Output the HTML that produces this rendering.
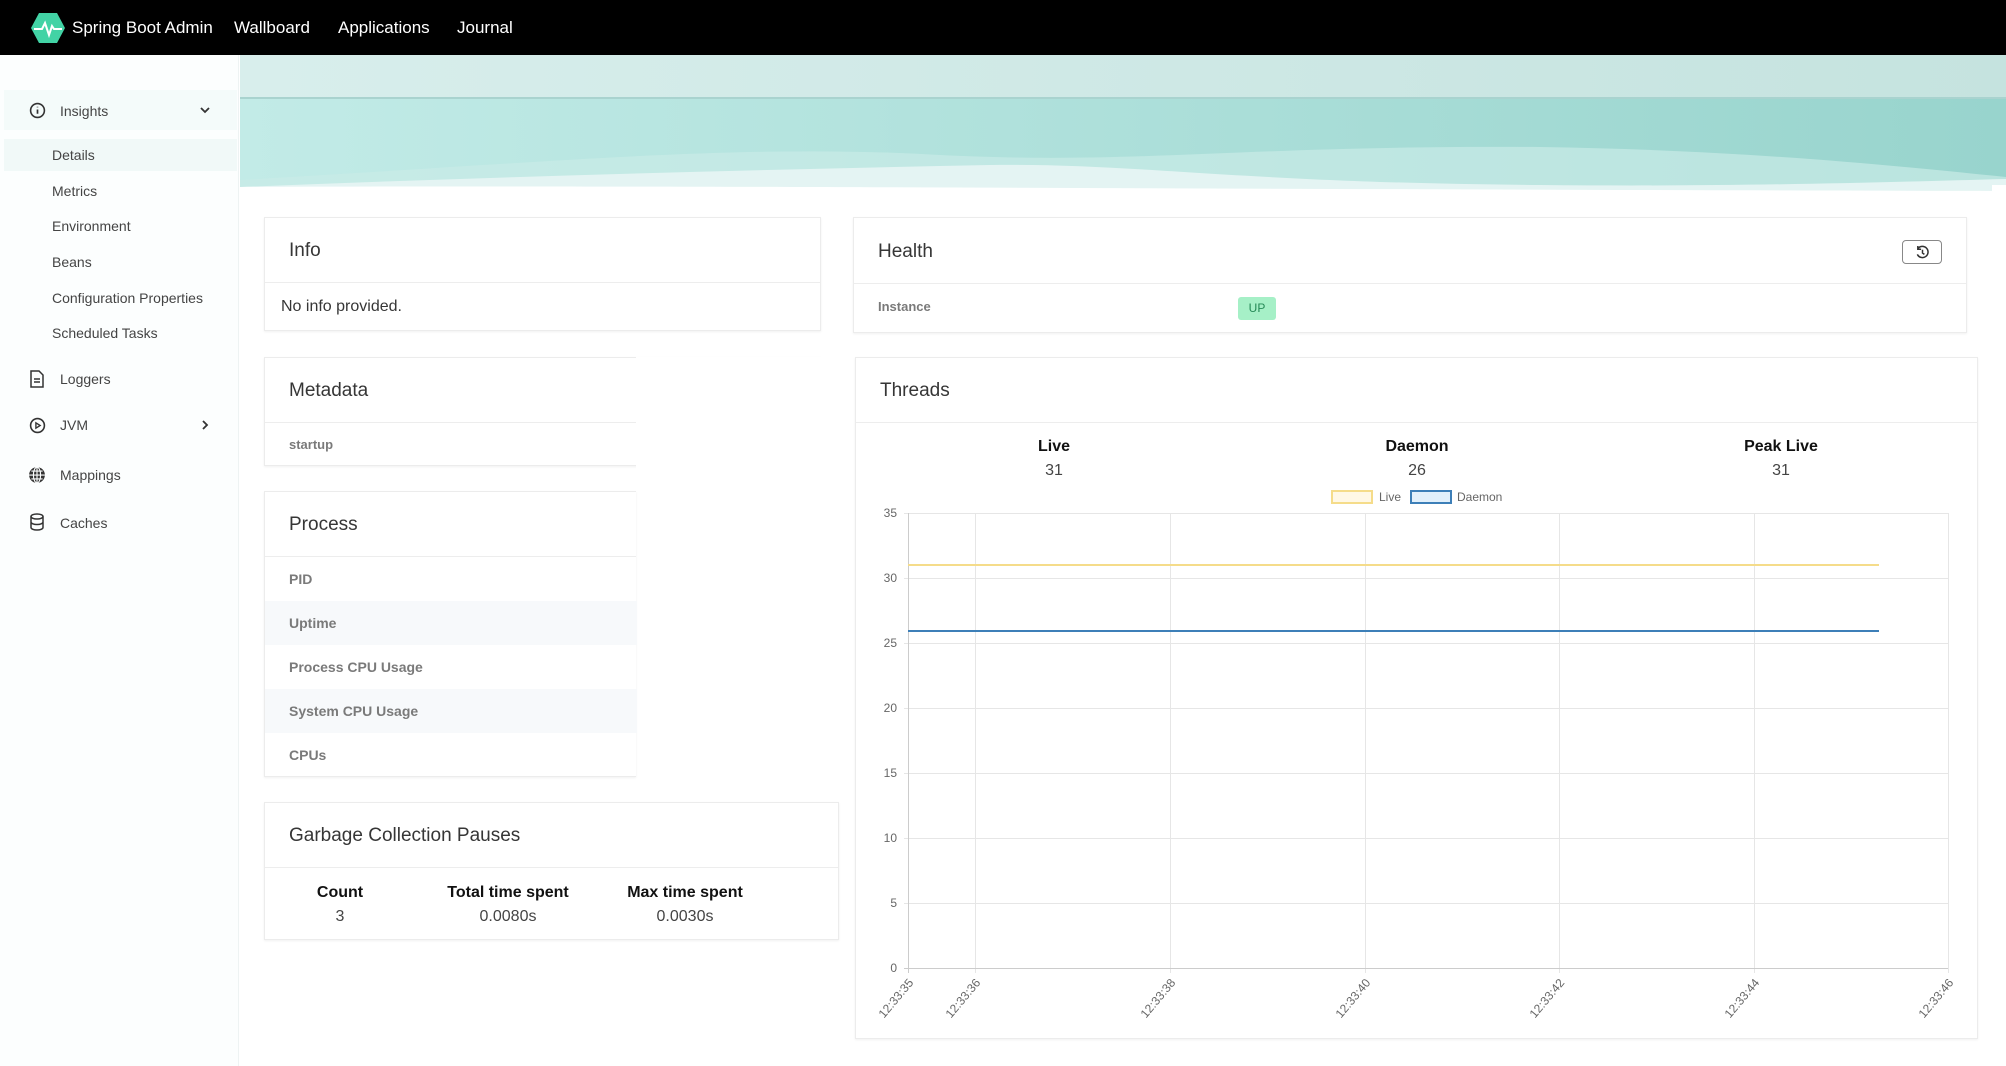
<!DOCTYPE html>
<html><head><meta charset="utf-8"><style>
*{box-sizing:border-box;margin:0;padding:0}
body{width:2006px;height:1066px;background:#fff;font-family:"Liberation Sans",sans-serif;color:#363636;position:relative;overflow:hidden}
.a{position:absolute}
.top{left:0;top:0;width:2006px;height:55px;background:#000;color:#fff;font-size:17px}
.top span{position:absolute;top:18px}
.side{left:0;top:55px;width:239px;height:1011px;background:#fcfefe;border-right:1px solid #eef3f3}
.si{position:absolute;font-size:14px;color:#444}
.card{position:absolute;background:#fff;border:1px solid #ececec;box-shadow:0 1px 2px rgba(0,0,0,.06)}
.ct{position:absolute;left:24px;font-size:19px;color:#363636}
.hl{position:absolute;left:0;right:0;height:1px;background:#ededed}
.lbl{position:absolute;left:24px;font-size:14px;font-weight:bold;color:#7a7a7a}
.b{font-weight:bold;color:#111;font-size:16px;position:absolute;text-align:center;width:200px}
.n{color:#444;font-size:16px;position:absolute;text-align:center;width:200px}
</style></head><body>
<div class="a top">
<svg class="a" style="left:31px;top:13px" width="34" height="30" viewBox="0 0 34 30"><polygon points="8,0 26,0 34,15 26,30 8,30 0,15" fill="#42d3a5"/><polyline points="3,16 11,16 14,10 18,22 21,13 23,16 31,16" fill="none" stroke="#fff" stroke-width="2"/></svg>
<span style="left:72px">Spring Boot Admin</span><span style="left:234px">Wallboard</span><span style="left:338px">Applications</span><span style="left:457px">Journal</span>
</div>
<div class="a side">
<div class="a" style="left:4px;top:35px;width:233px;height:40px;background:#f4fbfa"></div>
<div class="a" style="left:4px;top:84px;width:233px;height:32px;background:#f1f9f8"></div>
<svg class="a" style="left:29px;top:47px" width="17" height="17" viewBox="0 0 16 16"><circle cx="8" cy="8" r="6.5" fill="none" stroke="#333" stroke-width="1.5"/><path d="M8 7v4M8 4.5v.5" stroke="#333" stroke-width="1.6"/></svg>
<div class="si" style="left:60px;top:48px">Insights</div>
<svg class="a" style="left:199px;top:50px" width="12" height="10" viewBox="0 0 12 10"><path d="M2 3l4 4 4-4" fill="none" stroke="#333" stroke-width="1.8"/></svg>
<div class="si" style="left:52px;top:92px">Details</div>
<div class="si" style="left:52px;top:128px">Metrics</div>
<div class="si" style="left:52px;top:163px">Environment</div>
<div class="si" style="left:52px;top:199px">Beans</div>
<div class="si" style="left:52px;top:235px">Configuration Properties</div>
<div class="si" style="left:52px;top:270px">Scheduled Tasks</div>
<svg class="a" style="left:29px;top:315px" width="16" height="18" viewBox="0 0 16 18"><path d="M2 1h8l4 4v12H2z M5 9h6M5 12h6" fill="none" stroke="#333" stroke-width="1.5"/></svg>
<div class="si" style="left:60px;top:316px">Loggers</div>
<svg class="a" style="left:29px;top:362px" width="17" height="17" viewBox="0 0 16 16"><circle cx="8" cy="8" r="6.5" fill="none" stroke="#333" stroke-width="1.5"/><path d="M6.5 5.5v5l4-2.5z" fill="none" stroke="#333" stroke-width="1.3"/></svg>
<div class="si" style="left:60px;top:362px">JVM</div>
<svg class="a" style="left:200px;top:364px" width="10" height="12" viewBox="0 0 10 12"><path d="M3 2l4 4-4 4" fill="none" stroke="#333" stroke-width="1.8"/></svg>
<svg class="a" style="left:28px;top:411px" width="18" height="18" viewBox="0 0 16 16"><circle cx="8" cy="8" r="7" fill="#333"/><path d="M1 8h14M8 1v14M3 4.5h10M3 11.5h10" stroke="#fcfefe" stroke-width="1"/><ellipse cx="8" cy="8" rx="3.2" ry="7" fill="none" stroke="#fcfefe" stroke-width="1"/></svg>
<div class="si" style="left:60px;top:412px">Mappings</div>
<svg class="a" style="left:29px;top:458px" width="16" height="18" viewBox="0 0 16 18"><ellipse cx="8" cy="3.5" rx="6" ry="2.5" fill="none" stroke="#333" stroke-width="1.5"/><path d="M2 3.5v11c0 1.4 2.7 2.5 6 2.5s6-1.1 6-2.5v-11M2 9c0 1.4 2.7 2.5 6 2.5s6-1.1 6-2.5" fill="none" stroke="#333" stroke-width="1.5"/></svg>
<div class="si" style="left:60px;top:460px">Caches</div>
</div>
<svg class="a" style="left:240px;top:55px" width="1766" height="140" viewBox="0 0 1766 140">
<defs><linearGradient id="g1" x1="0" x2="1"><stop offset="0" stop-color="#d8eeec"/><stop offset="1" stop-color="#c5e3df"/></linearGradient>
<linearGradient id="g2" x1="0" x2="1"><stop offset="0" stop-color="#c2ebe7"/><stop offset="1" stop-color="#98d4cd"/></linearGradient></defs>
<rect width="1766" height="43" fill="url(#g1)"/><rect y="42" width="1766" height="3" fill="#a9d3cf"/>
<rect y="44" width="1766" height="96" fill="url(#g2)"/>
<path d="M0 125 C300 108 500 88 700 100 C900 110 1000 90 1300 92 C1500 95 1650 110 1766 122 L1766 140 L0 140Z" fill="#c9ebe7" opacity=".7"/>
<path d="M0 132 C250 122 500 115 750 110 C900 108 1000 128 1300 130 C1500 132 1650 127 1766 124 L1766 140 L0 140Z" fill="#e4f4f3"/>
<path d="M0 132 C400 130 900 134 1766 136 L1766 140 L0 140Z" fill="#fff"/>
<rect x="1752" y="130" width="14" height="10" fill="#fff"/>
</svg>
<div class="card" style="left:264px;top:217px;width:557px;height:114px"><div class="ct" style="top:22px">Info</div><div class="hl" style="top:64px"></div><div class="a" style="left:16px;top:80px;font-size:16px">No info provided.</div></div>
<div class="card" style="left:853px;top:217px;width:1114px;height:116px"><div class="ct" style="top:23px">Health</div>
<div class="a" style="right:24px;top:22px;width:40px;height:24px;border:1px solid #888;border-radius:4px"><svg class="a" style="left:12px;top:4px" width="15" height="15" viewBox="0 0 16 16"><path d="M3 4a6 6 0 1 1-0.5 6M3 1v3.5h3.5M8 5v3.5l2 1.5" fill="none" stroke="#333" stroke-width="1.6"/></svg></div>
<div class="hl" style="top:65px"></div><div class="lbl" style="top:81px;font-size:13px">Instance</div>
<div class="a" style="left:384px;top:79px;width:38px;height:23px;background:#a6f0c7;border-radius:3px;color:#268a57;font-size:12px;text-align:center;line-height:23px">UP</div></div>
<div class="card" style="left:264px;top:357px;width:557px;height:109px;border-right:none"><div class="ct" style="top:22px">Metadata</div><div class="hl" style="top:64px"></div><div class="lbl" style="top:79px;font-size:13px">startup</div></div>
<div class="a" style="left:636px;top:357px;width:190px;height:112px;background:#fff"></div>
<div class="card" style="left:264px;top:491px;width:372px;height:286px;border-right:none"><div class="ct" style="top:22px">Process</div><div class="hl" style="top:64px"></div>
<div class="a" style="left:0;top:109px;width:372px;height:44px;background:#f7f9fb"></div><div class="a" style="left:0;top:197px;width:372px;height:44px;background:#f7f9fb"></div>
<div class="lbl" style="top:79px">PID</div><div class="lbl" style="top:123px">Uptime</div><div class="lbl" style="top:167px">Process CPU Usage</div><div class="lbl" style="top:211px">System CPU Usage</div><div class="lbl" style="top:255px">CPUs</div></div>
<div class="card" style="left:264px;top:802px;width:575px;height:138px"><div class="ct" style="top:22px">Garbage Collection Pauses</div><div class="hl" style="top:64px"></div>
<div class="b" style="left:-25px;top:81px">Count</div><div class="n" style="left:-25px;top:105px">3</div>
<div class="b" style="left:143px;top:81px">Total time spent</div><div class="n" style="left:143px;top:105px">0.0080s</div>
<div class="b" style="left:320px;top:81px">Max time spent</div><div class="n" style="left:320px;top:105px">0.0030s</div></div>
<div class="card" style="left:855px;top:357px;width:1123px;height:682px"><div class="ct" style="top:22px">Threads</div><div class="hl" style="top:64px"></div>
<div class="b" style="left:98px;top:80px">Live</div><div class="n" style="left:98px;top:104px">31</div>
<div class="b" style="left:461px;top:80px">Daemon</div><div class="n" style="left:461px;top:104px">26</div>
<div class="b" style="left:825px;top:80px">Peak Live</div><div class="n" style="left:825px;top:104px">31</div></div>
<svg class="a" style="left:856px;top:480px" width="1120" height="550" viewBox="856 480 1120 550" font-family="Liberation Sans, sans-serif" font-size="12" fill="#666">
<rect x="1332" y="491" width="40" height="12" fill="#fff8e6" stroke="#f5dc8a" stroke-width="2"/><text x="1379" y="501">Live</text>
<rect x="1411" y="491" width="40" height="12" fill="#e2f0fb" stroke="#3d7fb8" stroke-width="2"/><text x="1457" y="501">Daemon</text>
<g stroke="#e6e6e6" stroke-width="1">
<line x1="904" y1="513.5" x2="1948" y2="513.5"/><line x1="904" y1="578.5" x2="1948" y2="578.5"/><line x1="904" y1="643.5" x2="1948" y2="643.5"/><line x1="904" y1="708.5" x2="1948" y2="708.5"/><line x1="904" y1="773.5" x2="1948" y2="773.5"/><line x1="904" y1="838.5" x2="1948" y2="838.5"/><line x1="904" y1="903.5" x2="1948" y2="903.5"/>
<line x1="975.5" y1="513" x2="975.5" y2="973"/><line x1="1170.5" y1="513" x2="1170.5" y2="973"/><line x1="1365.5" y1="513" x2="1365.5" y2="973"/><line x1="1559.5" y1="513" x2="1559.5" y2="973"/><line x1="1754.5" y1="513" x2="1754.5" y2="973"/><line x1="1948.5" y1="513" x2="1948.5" y2="973"/></g>
<line x1="908.5" y1="513" x2="908.5" y2="973" stroke="#ccc"/><line x1="904" y1="968.5" x2="1948" y2="968.5" stroke="#ccc"/>
<g text-anchor="end"><text x="897" y="517">35</text><text x="897" y="582">30</text><text x="897" y="647">25</text><text x="897" y="712">20</text><text x="897" y="777">15</text><text x="897" y="842">10</text><text x="897" y="907">5</text><text x="897" y="972">0</text>
<text transform="translate(914,983) rotate(-50)">12:33:35</text><text transform="translate(981,983) rotate(-50)">12:33:36</text><text transform="translate(1176,983) rotate(-50)">12:33:38</text><text transform="translate(1371,983) rotate(-50)">12:33:40</text><text transform="translate(1565,983) rotate(-50)">12:33:42</text><text transform="translate(1760,983) rotate(-50)">12:33:44</text><text transform="translate(1954,983) rotate(-50)">12:33:46</text></g>
<line x1="908" y1="565" x2="1879" y2="565" stroke="#f5dc8a" stroke-width="2"/>
<line x1="908" y1="631" x2="1879" y2="631" stroke="#3d7fb8" stroke-width="2"/>
</svg>
</body></html>
